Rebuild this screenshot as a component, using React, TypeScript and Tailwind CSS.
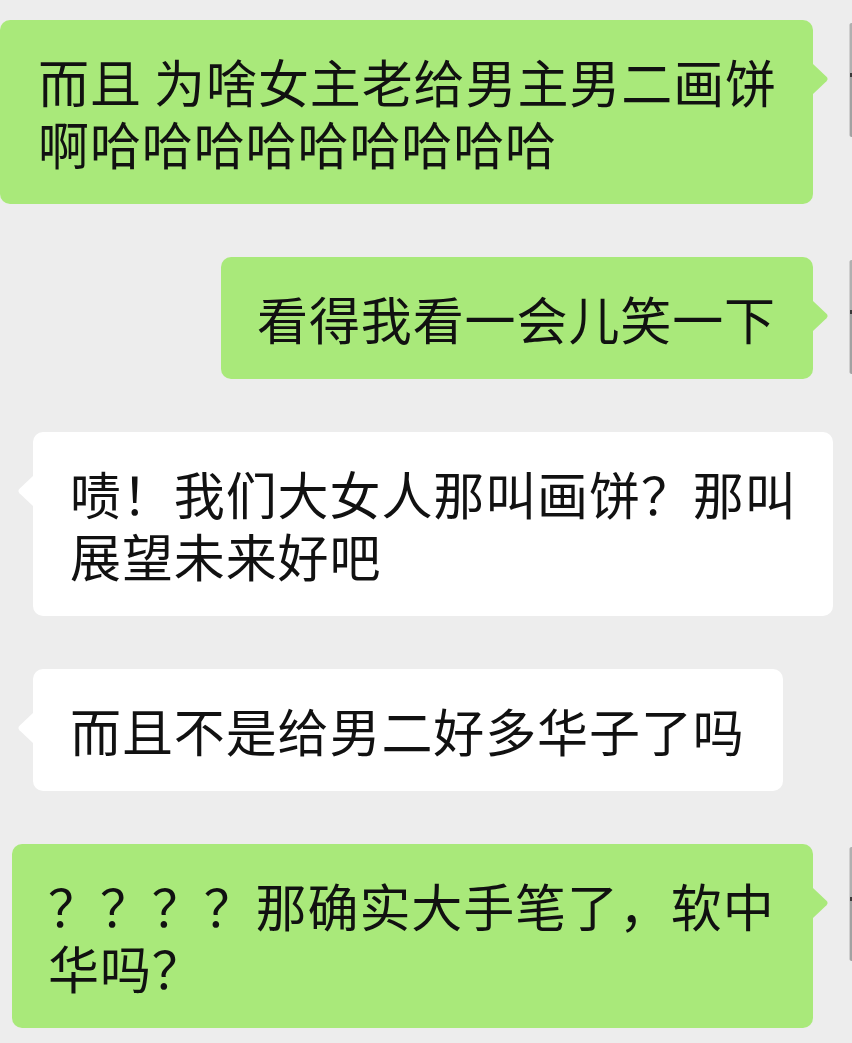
import React from "react";

type Msg = {
  side: "me" | "other";
  lines: string[];
  box: string;
};

const messages: Msg[] = [
  { side: "me", lines: ["而且 为啥女主老给男主男二画饼", "啊哈哈哈哈哈哈哈哈哈"], box: "w-[813px] pl-[38px]" },
  { side: "me", lines: ["看得我看一会儿笑一下"], box: "w-[592px] pl-[36px]" },
  { side: "other", lines: ["啧！我们大女人那叫画饼？那叫", "展望未来好吧"], box: "w-[800px] pl-[37px]" },
  { side: "other", lines: ["而且不是给男二好多华子了吗"], box: "w-[750px] pl-[37px]" },
  { side: "me", lines: ["？？？？那确实大手笔了，软中", "华吗？"], box: "w-[801px] pl-[36px]" },
];

function Tail({ side }: { side: "me" | "other" }) {
  // little arrow on the bubble edge, tip ~59px from the top
  if (side === "me") {
    return (
      <svg className="absolute left-full top-[44px]" width="16" height="30" viewBox="0 0 16 30">
        <path d="M0 0 L13.5 12.8 Q15.6 15 13.5 17.2 L0 30 Z" fill="#a9e97a" />
      </svg>
    );
  }
  return (
    <svg className="absolute right-full top-[44px]" width="16" height="30" viewBox="0 0 16 30">
      <path d="M16 0 L2.5 12.8 Q0.4 15 2.5 17.2 L16 30 Z" fill="#ffffff" />
    </svg>
  );
}

function Bubble({ msg }: { msg: Msg }) {
  const color = msg.side === "me" ? "bg-[#a9e97a]" : "bg-white";
  return (
    <div className={`relative shrink-0 rounded-[10px] py-[30px] ${color} ${msg.box}`}>
      <Tail side={msg.side} />
      <div className="whitespace-nowrap text-[51px] leading-[62px] tracking-[0.9px] text-[#111111]">
        {msg.lines.map((line, i) => (
          <div key={i}>{line}</div>
        ))}
      </div>
    </div>
  );
}

function AvatarEdge() {
  // only a sliver of the avatar shows at the right edge of the crop
  return (
    <div className="ml-[36px] mt-[3px] flex h-[114px] w-[3px] shrink-0 flex-col overflow-hidden rounded-l-[6px] border-l border-[#cfcfcf] bg-[#a7a7a7]">
      <div className="h-[50px] bg-[#b0b0b0]" />
      <div className="h-[4px] bg-[#3a3a3a]" />
      <div className="flex-1 bg-[#a2a2a2]" />
    </div>
  );
}

export default function App() {
  return (
    <main className="min-h-screen w-full overflow-hidden bg-[#ededed] font-['Noto_Sans_CJK_SC','Noto_Sans',sans-serif]">
      <div className="flex flex-col gap-[53px] pt-[20px] pb-[20px]">
        {messages.map((msg, i) =>
          msg.side === "me" ? (
            <div key={i} className="flex items-start justify-end">
              <Bubble msg={msg} />
              <AvatarEdge />
            </div>
          ) : (
            <div key={i} className="flex items-start pl-[33px]">
              <Bubble msg={msg} />
            </div>
          )
        )}
      </div>
    </main>
  );
}
